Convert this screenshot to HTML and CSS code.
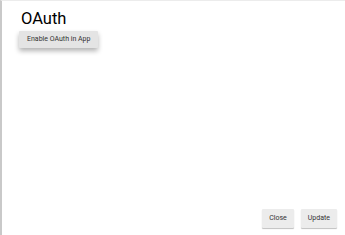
FILE: index.html
```html
<!DOCTYPE html>
<html>
<head>
<meta charset="utf-8">
<link rel="stylesheet" href="styles.css">
</head>
<body>
<div class="dialog">
  <div class="content">
    <h1 class="title">OAuth</h1>
    <div class="row"><button class="btn raised">Enable OAuth in App</button></div>
  </div>
  <div class="actions">
    <button class="btn">Close</button>
    <button class="btn">Update</button>
  </div>
</div>
</body>
</html>
```
FILE: styles.css
```css
html, body {
  margin: 0;
  padding: 0;
  height: 100%;
  background: #fff;
}
body {
  font-family: Roboto, "Liberation Sans", sans-serif;
}
.dialog {
  box-sizing: border-box;
  height: 235px;
  width: 345px;
  border-left: 2px solid #c9c9c9;
  border-top: 1px solid #ececec;
  display: flex;
  flex-direction: column;
  justify-content: space-between;
}
.content {
  padding: 7px 0 0 17px;
}
.title {
  margin: 0 0 0 2px;
  font-size: 16.5px;
  font-weight: 400;
  line-height: 22px;
  color: #000;
}
.row {
  display: flex;
  margin-top: 1px;
}
.btn {
  font-family: Roboto, "Liberation Sans", sans-serif;
  font-size: 7px;
  line-height: 1;
  color: #333;
  background: #ececec;
  border: none;
  border-radius: 1px;
  height: 19px;
  padding: 0 7px;
  box-shadow: 0 1px 1px rgba(0,0,0,0.25);
  cursor: pointer;
}
.raised {
  height: 17px;
  padding: 0 8px;
  background: #e4e4e4;
  box-shadow: 0 3px 5px rgba(0,0,0,0.3);
}
.actions {
  display: flex;
  justify-content: flex-end;
  gap: 7px;
  padding: 0 8px 7px 0;
}
```
